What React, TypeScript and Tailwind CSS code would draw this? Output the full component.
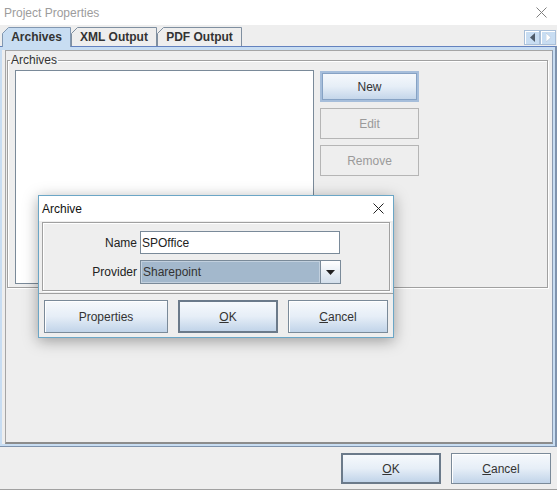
import React from 'react';

const btn =
  'flex items-center justify-center text-[#333] bg-linear-to-b from-[#f6f9fc] via-[#e6eef7] to-[#c1d4e9]';

function CloseX({ color, size }: { color: string; size: number }) {
  const e = size - 0.5;
  return (
    <svg width={size} height={size} viewBox={`0 0 ${size} ${size}`}>
      <path d={`M0.5 0.5 L${e} ${e} M${e} 0.5 L0.5 ${e}`} stroke={color} strokeWidth="1" fill="none" />
    </svg>
  );
}

function ArchiveDialog() {
  return (
    <div className="absolute left-[38px] top-[195px] w-[356px] h-[143px] flex flex-col border border-[#6ba6c6] bg-[#eeeeee] shadow-[0_3px_14px_rgba(0,0,0,0.35)]">
      <div className="h-[25px] bg-white flex items-center justify-between pl-[3px] pr-[9px] text-[#111] text-[12px]">
        <span>Archive</span>
        <CloseX color="#222" size={11} />
      </div>

      {/* form panel */}
      <div className="mt-px mx-[3px] border border-[#a0a0a0] shadow-[inset_1px_1px_0_#fff,1px_1px_0_#fff] grid grid-cols-[94px_auto] items-center gap-x-[3px] gap-y-[6px] pt-[8px] pb-[6px]">
        <div className="text-right text-[#222]">Name</div>
        <div className="w-[200px] h-[23px] bg-white border border-[#7a8a99] pl-px flex items-center text-[#222]">
          SPOffice
        </div>
        <div className="text-right text-[#222]">Provider</div>
        <div className="w-[201px] h-[24px] border border-[#7a8a99] flex">
          <div className="flex-1 bg-[#a3b8cc] border border-[#c2d0de] pl-px flex items-center text-[#333]">
            Sharepoint
          </div>
          <div className="w-[20px] border-l border-[#7a8a99] flex items-center justify-center bg-linear-to-b from-[#ffffff] to-[#d3dfeb]">
            <svg width="9" height="5" viewBox="0 0 9 5">
              <path d="M0 0 L9 0 L4.5 5 Z" fill="#222" />
            </svg>
          </div>
        </div>
      </div>

      {/* buttons */}
      <div className="mt-[2px] border-t border-[#a0a0a0] flex gap-[10px] pl-[5px] pt-[6px]">
        <button className={`${btn} w-[124px] h-[33px] border border-[#7a8a99] shadow-[inset_1px_1px_0_#fff]`}>
          Properties
        </button>
        <button className={`${btn} w-[100px] h-[33px] border-2 border-[#6b7a8a]`}>
          <span><u>O</u>K</span>
        </button>
        <button className={`${btn} w-[100px] h-[33px] border border-[#7a8a99] shadow-[inset_1px_1px_0_#fff]`}>
          <span><u>C</u>ancel</span>
        </button>
      </div>
    </div>
  );
}

export default function App() {
  return (
    <div className="relative w-[557px] h-[490px] overflow-hidden bg-[#eeeeee] font-['Liberation_Sans',Arial,sans-serif] text-[12px] text-[#333]">
      {/* window title */}
      <div className="h-[25px] bg-white flex items-center justify-between pl-[4px] pr-[10px]">
        <span className="text-[#9c9c9c]">Project Properties</span>
        <CloseX color="#808080" size={11} />
      </div>

      {/* tab strip */}
      <div className="flex items-end h-[21px] pl-[2px] pr-[1px]">
        <div className="relative z-10 -mb-px w-[69px] h-[20px] flex items-center justify-center font-bold">
          <svg className="absolute inset-0" width="69" height="20">
            <polyline points="0.5,20 0.5,6.5 6.5,0.5 68.5,0.5 68.5,20" fill="#c8ddf2" stroke="#8197b1" />
          </svg>
          <span className="relative">Archives</span>
        </div>
        <div className="relative w-[86px] h-[19px] flex items-center justify-center font-bold">
          <svg className="absolute inset-0" width="86" height="19">
            <polyline points="0.5,19 0.5,6.5 6.5,0.5 85.5,0.5 85.5,19" fill="#eeeeee" stroke="#7f8fa0" />
          </svg>
          <span className="relative">XML Output</span>
        </div>
        <div className="relative w-[85px] h-[19px] flex items-center justify-center font-bold">
          <svg className="absolute inset-0" width="85" height="19">
            <polyline points="0.5,19 0.5,6.5 6.5,0.5 84.5,0.5 84.5,19" fill="#eeeeee" stroke="#7f8fa0" />
          </svg>
          <span className="relative">PDF Output</span>
        </div>
        <div className="ml-auto flex mb-px">
          <div className="w-[16px] h-[15px] bg-[#c8ddf2] border border-[#a9bfd8] shadow-[inset_1px_1px_0_#fff] flex items-center justify-center">
            <svg width="5" height="9" viewBox="0 0 5 9">
              <path d="M0 4.5 L5 0 L5 9 Z" fill="#4f5b69" />
            </svg>
          </div>
          <div className="w-[16px] h-[15px] bg-[#c8ddf2] border border-[#a9bfd8] shadow-[inset_1px_1px_0_#fff] flex items-center justify-center">
            <svg width="5" height="9" viewBox="0 0 5 9">
              <path d="M5 4.5 L0 0 L0 9 Z" fill="#ffffff" stroke="#b3c3d6" strokeWidth="0.6" />
            </svg>
          </div>
        </div>
      </div>

      {/* tab content */}
      <div className="h-[401px] border-t border-[#6382bf] border-r-2 border-r-[#7f93ad] border-b border-b-[#7f93ad] bg-[#c8ddf2] pt-[3px] pl-[2px] pr-[2px] pb-[2px]">
        <div className="h-full bg-[#eeeeee] pl-[3px]">
          <div className="h-full border-l border-t border-[#a5a5a5] border-r border-r-[#8a9ab0] border-b-2 border-b-[#8c8c8c] pl-px pr-[4px] pt-[2px]">
            <fieldset className="border border-[#a0a0a0] shadow-[inset_1px_1px_0_#fff,1px_1px_0_#fff]">
              <legend className="ml-[2px] px-px leading-[14px] text-[#333]">Archives</legend>
              <div className="flex items-start pl-[7px] pt-[3px] pb-[3px]">
                <div className="w-[299px] h-[214px] bg-white border border-[#7a8a99]" />
                <div className="ml-[6px] mt-px flex flex-col gap-[6px]">
                  <button className={`${btn} w-[99px] h-[31px] border-2 border-[#a6bedb] shadow-[inset_0_0_0_1px_#86a2c4]`}>
                    New
                  </button>
                  <button className="w-[99px] h-[31px] border border-[#b5b5b5] bg-[#eeeeee] text-[#9a9a9a]">
                    Edit
                  </button>
                  <button className="w-[99px] h-[31px] border border-[#b5b5b5] bg-[#eeeeee] text-[#9a9a9a]">
                    Remove
                  </button>
                </div>
              </div>
            </fieldset>
          </div>
        </div>
      </div>

      {/* bottom buttons */}
      <div className="h-[43px] flex justify-end items-start gap-[10px] pt-[6px] pr-[6px] border-b border-[#a0a0a0]">
        <button className={`${btn} w-[100px] h-[31px] border-2 border-[#6b7a8a]`}>
          <span><u>O</u>K</span>
        </button>
        <button className={`${btn} w-[100px] h-[31px] border border-[#7a8a99] shadow-[inset_1px_1px_0_#fff]`}>
          <span><u>C</u>ancel</span>
        </button>
      </div>

      <ArchiveDialog />
    </div>
  );
}
